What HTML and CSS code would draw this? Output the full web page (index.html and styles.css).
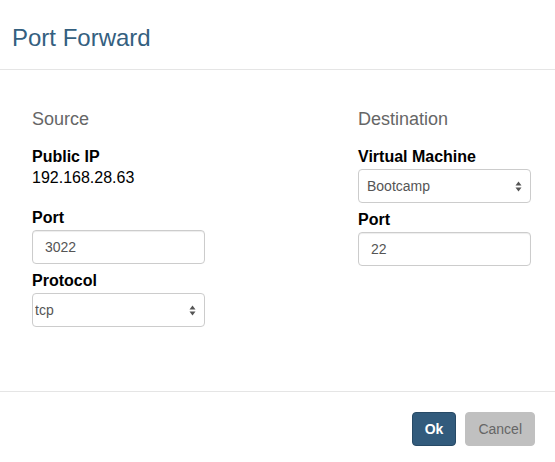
FILE: index.html
```html
<!DOCTYPE html>
<html>
<head>
<meta charset="utf-8">
<link rel="stylesheet" href="styles.css">
</head>
<body>
<div class="modal">
  <div class="modal-header">
    <h1 class="modal-title">Port Forward</h1>
  </div>
  <div class="modal-body">
    <div class="col">
      <h4 class="section-title">Source</h4>
      <div class="field">
        <div class="label">Public IP</div>
        <div class="value">192.168.28.63</div>
      </div>
      <div class="field field-port">
        <label class="label">Port</label>
        <input class="control" type="text" value="3022">
      </div>
      <div class="field">
        <label class="label">Protocol</label>
        <div class="select-wrap">
          <select class="control select select-tight"><option>tcp</option></select>
          <svg class="arrows" width="7" height="11" viewBox="0 0 7 11"><path d="M3.5 0.5 L6.5 4.5 L0.5 4.5 Z M3.5 10.5 L6.5 6.5 L0.5 6.5 Z" fill="#555"/></svg>
        </div>
      </div>
    </div>
    <div class="col">
      <h4 class="section-title">Destination</h4>
      <div class="field">
        <label class="label">Virtual Machine</label>
        <div class="select-wrap">
          <select class="control select"><option>Bootcamp</option></select>
          <svg class="arrows" width="7" height="11" viewBox="0 0 7 11"><path d="M3.5 0.5 L6.5 4.5 L0.5 4.5 Z M3.5 10.5 L6.5 6.5 L0.5 6.5 Z" fill="#555"/></svg>
        </div>
      </div>
      <div class="field">
        <label class="label">Port</label>
        <input class="control" type="text" value="22">
      </div>
    </div>
  </div>
  <div class="modal-footer">
    <button class="btn btn-primary">Ok</button>
    <button class="btn btn-default">Cancel</button>
  </div>
</div>
</body>
</html>
```
FILE: styles.css
```css
html, body {
  margin: 0;
  padding: 0;
  background: #fff;
}
body {
  font-family: "Liberation Sans", Arial, sans-serif;
  color: #000;
}
.modal {
  width: 555px;
  height: 462px;
  display: flex;
  flex-direction: column;
}
.modal-header {
  height: 70px;
  box-sizing: border-box;
  padding: 24px 12px 0;
  border-bottom: 1px solid #e5e5e5;
}
.modal-title {
  margin: 0;
  font-size: 24px;
  font-weight: normal;
  line-height: 27px;
  color: #34607f;
}
.modal-body {
  height: 321px;
  box-sizing: border-box;
  padding: 39px 0 0 32px;
  display: grid;
  grid-template-columns: 173px 173px;
  column-gap: 153px;
  align-items: start;
}
.col {
  display: flex;
  flex-direction: column;
}
.section-title {
  margin: 0 0 19px;
  font-size: 18px;
  font-weight: normal;
  line-height: 20px;
  color: #666;
}
.field {
  display: flex;
  flex-direction: column;
  margin-bottom: 8px;
}
.field-port {
  margin-top: 13px;
}
.label {
  display: block;
  font-size: 16px;
  font-weight: bold;
  line-height: 18px;
  margin-bottom: 3px;
}
.value {
  font-size: 16px;
  line-height: 20px;
  margin-top: -1px;
}
.control {
  display: block;
  width: 173px;
  height: 34px;
  box-sizing: border-box;
  padding: 6px 12px;
  font-family: "Liberation Sans", Arial, sans-serif;
  font-size: 14px;
  color: #555;
  background: #fff;
  border: 1px solid #ccc;
  border-radius: 4px;
  box-shadow: inset 0 1px 1px rgba(0,0,0,0.075);
  margin: 0;
  outline: none;
}
.select-wrap {
  position: relative;
}
.select {
  appearance: none;
  -webkit-appearance: none;
  padding-left: 8px;
  box-shadow: none;
}
.select-tight {
  padding-left: 2px;
}
.arrows {
  position: absolute;
  right: 9px;
  top: 12px;
}
.modal-footer {
  flex: 1;
  border-top: 1px solid #e5e5e5;
  padding: 20px 20px 0 0;
  display: flex;
  justify-content: flex-end;
  align-items: flex-start;
  gap: 9px;
}
.btn {
  height: 34px;
  padding: 0 12px;
  font-family: "Liberation Sans", Arial, sans-serif;
  font-size: 14px;
  border-radius: 4px;
  border: 1px solid transparent;
  cursor: pointer;
}
.btn-primary {
  background: #325b7c;
  border-color: #274a66;
  color: #fff;
  font-weight: bold;
}
.btn-default {
  background: #c0c0c0;
  border-color: #c0c0c0;
  color: #666;
}
```
